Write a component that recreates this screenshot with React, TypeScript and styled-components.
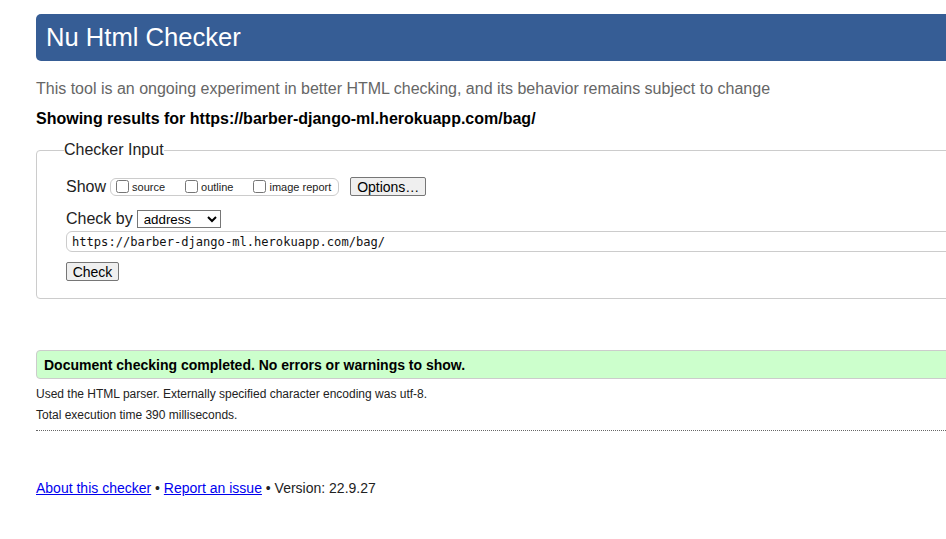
import styled, { createGlobalStyle } from "styled-components";

const GlobalStyle = createGlobalStyle`
  html, body {
    margin: 0;
    padding: 0;
    background: #fff;
    overflow: hidden;
  }
  body {
    font-family: "Liberation Sans", Arial, sans-serif;
    color: #000;
  }
`;

const Page = styled.div`
  width: 1200px;
  padding: 14px 0 40px 36px;
`;

const Header = styled.h1`
  margin: 0;
  height: 47px;
  display: flex;
  align-items: center;
  padding-left: 10px;
  background: #365d95;
  color: #fff;
  font-size: 25.6px;
  font-weight: normal;
  border-radius: 5px;
`;

const Intro = styled.p`
  margin: 19px 0 0;
  font-size: 16px;
  line-height: 18px;
  color: #666;
`;

const Results = styled.p`
  margin: 12px 0 0;
  font-size: 16px;
  line-height: 18px;
  font-weight: bold;
  color: #000;
`;

const Fieldset = styled.fieldset`
  margin: 13px 0 0;
  padding: 18px 0 17px 27px;
  border: 1px solid #ccc;
  border-radius: 4px;
  min-width: 0;
`;

const Legend = styled.legend`
  padding: 0;
  font-size: 16px;
  line-height: 18px;
  color: #222;
`;

const Row = styled.div<{ $top?: number }>`
  display: flex;
  align-items: center;
  margin-top: ${(p) => p.$top ?? 0}px;
  margin-left: 2px;
  font-size: 16px;
  color: #222;
`;

const RowLabel = styled.span`
  margin-right: 4px;
`;

const CheckGroup = styled.span`
  display: inline-flex;
  align-items: center;
  height: 16px;
  padding: 0 7px 0 5px;
  border: 1px solid #ccc;
  border-radius: 6px;
`;

const Check = styled.label<{ $gap?: number }>`
  display: inline-flex;
  align-items: center;
  font-size: 11px;
  color: #222;
  margin-left: ${(p) => p.$gap ?? 0}px;

  input {
    width: 13px;
    height: 13px;
    margin: 0 3px 0 0;
  }
`;

const Button = styled.button<{ $width: number }>`
  width: ${(p) => p.$width}px;
  height: 19px;
  padding: 0;
  font-family: "Liberation Sans", Arial, sans-serif;
  font-size: 14px;
  color: #000;
  background: #efefef;
  border: 1px solid #767676;
  border-radius: 2px;
`;

const OptionsButton = styled(Button)`
  margin-left: 11px;
`;

const Select = styled.select`
  width: 84px;
  height: 18px;
  padding: 0 0 0 2px;
  font-family: "Liberation Sans", Arial, sans-serif;
  font-size: 13.3px;
  color: #000;
  background: #fff;
  border: 1px solid #767676;
  border-radius: 0;
`;

const UrlInput = styled.input`
  display: block;
  box-sizing: border-box;
  width: 1200px;
  height: 21px;
  margin: 3px 0 0 2px;
  padding: 0 0 0 5px;
  font-family: "DejaVu Sans Mono", "Liberation Mono", monospace;
  font-size: 12.1px;
  color: #111;
  border: 1px solid #ccc;
  border-radius: 6px;
  outline: none;
`;

const CheckButton = styled(Button)`
  display: block;
  margin: 10px 0 0 2px;
`;

const Success = styled.p`
  box-sizing: border-box;
  height: 29px;
  margin: 51px 0 0;
  padding: 0 0 0 7px;
  display: flex;
  align-items: center;
  background: #ccffcc;
  border: 1px solid #ccc;
  border-radius: 4px;
  font-size: 14px;
  font-weight: bold;
  color: #000;
`;

const Detail = styled.p<{ $top: number }>`
  margin: ${(p) => p.$top}px 0 0;
  font-size: 12px;
  line-height: 14px;
  color: #222;
`;

const Rule = styled.hr`
  margin: 8px 0 0;
  border: 0;
  border-top: 1px dotted #666;
`;

const Footer = styled.p`
  margin: 49px 0 0;
  font-size: 14px;
  line-height: 16px;
  color: #222;

  a {
    color: #0000ee;
    text-decoration: underline;
  }
`;

function App() {
  return (
    <>
      <GlobalStyle />
      <Page>
        <Header>Nu Html Checker</Header>
        <Intro>
          This tool is an ongoing experiment in better HTML checking, and its behavior remains
          subject to change
        </Intro>
        <Results>Showing results for https://barber-django-ml.herokuapp.com/bag/</Results>
        <Fieldset>
          <Legend>Checker Input</Legend>
          <Row>
            <RowLabel>Show</RowLabel>
            <CheckGroup>
              <Check>
                <input type="checkbox" />
                source
              </Check>
              <Check $gap={20}>
                <input type="checkbox" />
                outline
              </Check>
              <Check $gap={20}>
                <input type="checkbox" />
                image report
              </Check>
            </CheckGroup>
            <OptionsButton $width={76}>Options…</OptionsButton>
          </Row>
          <Row $top={14}>
            <RowLabel>Check by</RowLabel>
            <Select defaultValue="address">
              <option value="address">address</option>
              <option value="file">file upload</option>
              <option value="text">text input</option>
            </Select>
          </Row>
          <UrlInput readOnly value="https://barber-django-ml.herokuapp.com/bag/" />
          <CheckButton $width={53}>Check</CheckButton>
        </Fieldset>
        <Success>Document checking completed. No errors or warnings to show.</Success>
        <Detail $top={8}>
          Used the HTML parser. Externally specified character encoding was utf-8.
        </Detail>
        <Detail $top={7}>Total execution time 390 milliseconds.</Detail>
        <Rule />
        <Footer>
          <a href="#about">About this checker</a> • <a href="#issue">Report an issue</a> •
          Version: 22.9.27
        </Footer>
      </Page>
    </>
  );
}

export default App;
